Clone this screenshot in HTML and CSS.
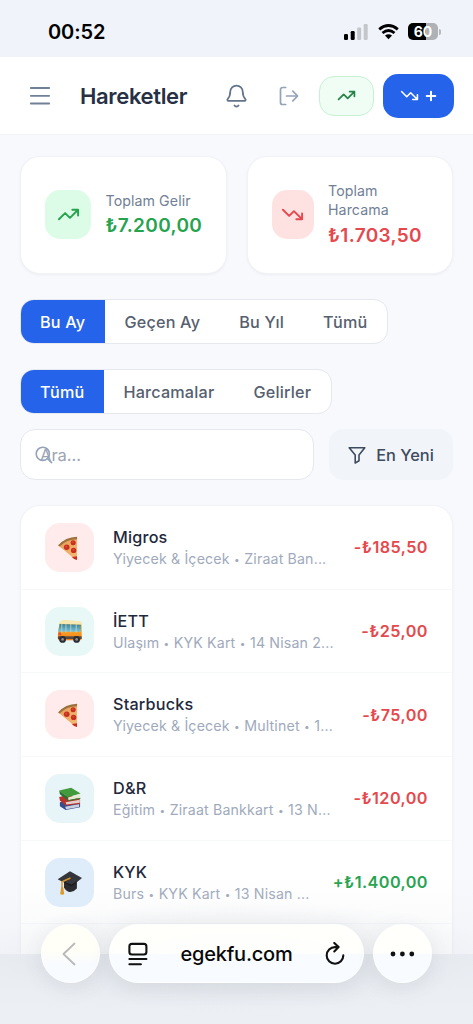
FILE: index.html
```html
<!DOCTYPE html>
<html lang="tr">
<head>
<meta charset="utf-8">
<meta name="viewport" content="width=device-width, initial-scale=1">
<title>Hareketler</title>
<link rel="stylesheet" href="styles.css">
</head>
<body>
<svg class="defs" width="0" height="0" aria-hidden="true">
  <defs>
    <linearGradient id="bus-body" x1="0" y1="0" x2="0" y2="1"><stop offset="0" stop-color="#ffd23c"/><stop offset="1" stop-color="#f47b16"/></linearGradient>
    <linearGradient id="glass" x1="0" y1="0" x2="0" y2="1"><stop offset="0" stop-color="#397f9c"/><stop offset="1" stop-color="#78c6dd"/></linearGradient>
    <linearGradient id="cheese" x1="0" y1="0" x2="1" y2="1"><stop offset="0" stop-color="#e29a55"/><stop offset="1" stop-color="#f6bd73"/></linearGradient>
  </defs>
  <symbol id="up" viewBox="0 0 24 24"><path d="M22 7l-8.5 8.5-5-5L2 17M16 7h6v6"/></symbol>
  <symbol id="down" viewBox="0 0 24 24"><path d="M22 17l-8.5-8.5-5 5L2 7M16 17h6v-6"/></symbol>
  <symbol id="pizza" viewBox="0 0 26 26">
    <path d="M1.4 10.5Q9 2.8 20.8 2.5V26Q16.8 24.8 14 21.2L2.8 12Z" fill="url(#cheese)"/>
    <path d="M1.2 10.8Q8.5 2 20.9 1.7V4.3Q10 4.3 2.5 12Z" fill="#9c713d"/>
    <g fill="#c82d20"><circle cx="10.1" cy="12.8" r="2.9"/><circle cx="16.8" cy="8" r="2.6"/><circle cx="17.3" cy="16" r="2.8"/><path d="M15.5 22.8l5.3-.8v4Q17.7 25.6 15.5 22.8Z"/></g>
    <g fill="#d94a2a"><circle cx="9.6" cy="12.2" r="1.2"/><circle cx="16.4" cy="7.5" r="1"/><circle cx="17" cy="15.4" r="1.1"/></g>
  </symbol>
  <symbol id="bus" viewBox="0 0 26 26">
    <path d="M2.5 5Q3 1.8 7 1.6L22 2.1Q25.6 2.3 25.7 6V20.2Q25.6 22 24 22H2Q.8 21.5.8 19L1.3 12Z" fill="url(#bus-body)"/>
    <path d="M2.5 5Q3 1.8 7 1.6L22 2.1Q25.6 2.3 25.7 6Z" fill="#f6e9b5"/>
    <path d="M2.7 5.3L24.8 6V13.2H1.3Z" fill="url(#glass)"/>
    <path d="M5 5V15M9.3 5V14M14.3 5V14M20 5V14" stroke="#d8d8b4" stroke-width=".8"/>
    <path d="M1 18h24.6v2.8H1Z" fill="#534b44"/><path d="M1.4 14h3v3h-3" fill="#e75722"/>
    <g fill="#2b2d33"><circle cx="5.8" cy="21.2" r="3.5"/><circle cx="20.4" cy="21.2" r="3.5"/></g><g fill="#8c9095"><circle cx="5.8" cy="21.2" r="1.4"/><circle cx="20.4" cy="21.2" r="1.4"/></g>
  </symbol>
  <symbol id="books" viewBox="0 0 26 26">
    <path d="M3 17l12-3 9 4v4.2l-15 2.7L3 21Z" fill="#344c91"/><path d="M8.5 21.5L23 18.8v3L9.5 24.2Z" fill="#c9cfdd"/>
    <path d="M2.3 11.5L12 9l12 5v4.8L9 20.2 3 15Z" fill="#b7322f"/><path d="M9 16.8L23.7 14.4v2.9L9.8 19.3Z" fill="#e3cfc8"/>
    <path d="M2.3 4.8L14.7 1.7 24.5 7.7 11 11.8Z" fill="#419a3c"/><path d="M2.3 4.8L11 11.8v3.4L3 8.5Z" fill="#28702c"/><path d="M11.5 12L24 8.2v4.1l-12 2.5Z" fill="#e3ead2"/><path d="M11 14.9l13.3-2.6v.9l-13.3 2.6Z" fill="#317b30"/>
  </symbol>
  <symbol id="cap" viewBox="0 0 26 26">
    <path d="M7.3 12L20.7 11V19.3Q17 23.5 12.7 22.8Q8.8 22 7.3 18Z" fill="#25262a"/>
    <path d="M.7 9.6L13.5 1.3 26 8.4 15 16.2Z" fill="#34353a"/><path d="M.7 9.6L15 15.3 26 8.4 15 17Z" fill="#131417"/>
    <path d="M14 8.3L5.2 12.2V19" fill="none" stroke="#d69422" stroke-width="1.5"/><path d="M4.4 18h2l1.1 7.3Q5.2 26.3 3.3 25Z" fill="#db961f"/>
  </symbol>
</svg>

<div class="phone">
  <div class="status">
    <time class="clock">00:52</time>
    <div class="status-icons">
      <svg width="24" height="16" viewBox="0 0 24 16"><rect x="0" y="10" width="4" height="6" rx="1.3"/><rect x="6.7" y="7" width="4" height="9" rx="1.3"/><g fill="#c3c6ca"><rect x="13.2" y="3.5" width="4" height="12.5" rx="1.3"/><rect x="19.7" y="0" width="4" height="16" rx="1.3"/></g></svg>
      <svg width="21" height="16" viewBox="0 0 21 16"><g fill="none" stroke="#000" stroke-width="2.8"><path d="M1.2 5.3Q10.5-2.4 19.8 5.3"/><path d="M4.5 9Q10.5 4 16.5 9"/></g><path d="M7 11.5Q10.5 8.8 14 11.5L10.5 15.2Z"/></svg>
      <span class="battery"><span>60</span></span>
    </div>
  </div>

  <header class="header">
    <svg class="menu" width="22" height="20" viewBox="0 0 22 20"><path d="M1.8 2h18.4M1.8 9.8h18.4M1.8 17.5h18.4"/></svg>
    <h1>Hareketler</h1>
    <svg class="bell" width="24" height="24" viewBox="0 0 24 24"><path d="M3.5 15.4a1 1 0 0 0 .7 1.7h15.6a1 1 0 0 0 .7-1.7C19.3 14.2 18 12.9 18 8.5a6 6 0 0 0-12 0c0 4.4-1.3 5.7-2.5 6.9M10 21.5a2.3 2.3 0 0 0 4 0"/></svg>
    <svg class="exit" width="20" height="20" viewBox="0 0 20 20"><path d="M6.7 1.5H3.5a2 2 0 0 0-2 2v13a2 2 0 0 0 2 2h3.2M7.5 10H18.5M13.8 5.2l4.8 4.8-4.8 4.8"/></svg>
    <button class="btn-income"><svg width="19" height="19"><use href="#up"/></svg></button>
    <button class="btn-expense"><svg width="19" height="19"><use href="#down"/></svg><svg width="12" height="12" viewBox="0 0 12 12"><path d="M6 1.7v8.6M1.7 6h8.6"/></svg></button>
  </header>

  <main class="main">
    <section class="stats">
      <article class="stat income"><span class="stat-icon"><svg width="23" height="23"><use href="#up"/></svg></span><div><p>Toplam Gelir</p><strong>₺7.200,00</strong></div></article>
      <article class="stat expense"><span class="stat-icon"><svg width="23" height="23"><use href="#down"/></svg></span><div><p>Toplam<br>Harcama</p><strong>₺1.703,50</strong></div></article>
    </section>

    <div class="segment period"><button class="active">Bu Ay</button><button>Geçen Ay</button><button>Bu Yıl</button><button>Tümü</button></div>
    <div class="segment kind"><button class="active">Tümü</button><button>Harcamalar</button><button>Gelirler</button></div>

    <div class="tools">
      <label class="search"><span>Ara...</span><svg width="18" height="18" viewBox="0 0 18 18"><circle cx="7.8" cy="7.8" r="6.6"/><path d="M12.6 12.6l4 4"/></svg></label>
      <button class="sort"><svg width="18" height="18" viewBox="0 0 18 18"><path d="M1.2 1.8h15.6L11 9v5.8L7.2 17V9Z"/></svg>En Yeni</button>
    </div>

    <section class="list">
      <article class="row"><span class="cat food"><svg width="25" height="25"><use href="#pizza"/></svg></span><div class="info"><h2>Migros</h2><p>Yiyecek &amp; İçecek <i>•</i> Ziraat Ban...</p></div><b>-₺185,50</b></article>
      <article class="row"><span class="cat travel"><svg width="25" height="25"><use href="#bus"/></svg></span><div class="info"><h2>İETT</h2><p>Ulaşım <i>•</i> KYK Kart <i>•</i> 14 Nisan 2...</p></div><b>-₺25,00</b></article>
      <article class="row"><span class="cat food"><svg width="25" height="25"><use href="#pizza"/></svg></span><div class="info"><h2>Starbucks</h2><p>Yiyecek &amp; İçecek <i>•</i> Multinet <i>•</i> 1...</p></div><b>-₺75,00</b></article>
      <article class="row"><span class="cat study"><svg width="25" height="25"><use href="#books"/></svg></span><div class="info"><h2>D&amp;R</h2><p>Eğitim <i>•</i> Ziraat Bankkart <i>•</i> 13 N...</p></div><b>-₺120,00</b></article>
      <article class="row"><span class="cat grant"><svg width="25" height="25"><use href="#cap"/></svg></span><div class="info"><h2>KYK</h2><p>Burs <i>•</i> KYK Kart <i>•</i> 13 Nisan ...</p></div><b class="plus">+₺1.400,00</b></article>
      <div class="row"></div>
    </section>
  </main>

  <div class="shade"></div>
  <nav class="browser-bar">
    <button class="round back"><svg width="16" height="24" viewBox="0 0 16 24"><path d="M13.5 1.5L2.5 12l11 10.5"/></svg></button>
    <div class="address">
      <svg width="20" height="24" viewBox="0 0 20 24"><rect x="1.4" y="1.9" width="17" height="10.6" rx="2.5"/><path d="M1.4 17h17M1.4 22.2h11.5"/></svg>
      <span>egekfu.com</span>
      <svg width="20" height="24" viewBox="0 0 20 24"><path d="M13.3 5.1H10A8.3 8.3 0 1 0 18.3 13.4M9.3 .9l4.3 4.2-4.3 4.3"/></svg>
    </div>
    <button class="round"><svg class="dots" width="26" height="6" viewBox="0 0 26 6"><circle cx="3" cy="3" r="2.4"/><circle cx="12.4" cy="3" r="2.4"/><circle cx="21.8" cy="3" r="2.4"/></svg></button>
  </nav>
</div>
</body>
</html>
```
FILE: styles.css
```css
* { box-sizing: border-box; }
body { margin: 0; font-family: Inter, "Noto Sans", sans-serif; color: #1e293b; background: #edf0f5; }
h1, h2, p { margin: 0; }
button { margin: 0; padding: 0; border: 0; background: none; font: inherit; letter-spacing: inherit; color: inherit; }
svg { display: block; flex: none; }
.defs { position: absolute; }
.phone { position: relative; height: 1024px; overflow: hidden; }

.status { height: 57px; padding: 6px 32px 0 48px; display: flex; align-items: center; justify-content: space-between; background: #f0f3f9; }
.clock { font-size: 20px; font-weight: 600; letter-spacing: -.1px; color: #000; }
.status-icons { display: flex; align-items: center; gap: 9px; }
.status-icons > svg:first-child { margin-right: 1px; }
.battery { display: flex; align-items: center; gap: 1px; }
.battery span { width: 30px; height: 17px; border-radius: 5px; background: linear-gradient(90deg, #000 60%, #aeb1b5 60%); color: #fff; font-size: 14px; font-weight: 700; line-height: 17px; text-align: center; }
.battery::after { content: ""; width: 2px; height: 6px; border-radius: 0 2px 2px 0; background: #b5b8bd; }

.header { height: 78px; padding: 0 19px 0 29px; display: flex; align-items: center; background: #fff; border-bottom: 1px solid #f0f2f7; fill: none; stroke-linecap: round; stroke-linejoin: round; }
.header h1 { width: 145px; margin-left: 29px; font-size: 22px; line-height: 28px; font-weight: 600; letter-spacing: -.35px; color: #273044; }
.menu { stroke: #718096; stroke-width: 1.8; }
.bell { width: 25px; height: 25px; margin-left: -1px; stroke: #64748b; stroke-width: 1.7; }
.exit { margin-left: 30px; stroke: #94a3b8; stroke-width: 1.7; }
.btn-income, .btn-expense { display: flex; align-items: center; justify-content: center; }
.btn-income { width: 55px; height: 40px; margin-left: 20px; border: 1px solid #c5f2d3; border-radius: 15px; background: #effdf4; stroke: #278448; stroke-width: 2.2; }
.btn-expense { width: 71px; height: 44px; margin-left: 9px; gap: 6px; border-radius: 15px; background: #2563eb; stroke: #fff; stroke-width: 2; }

.main { height: 819px; padding: 20.5px 20px 0; overflow: hidden; background: #f8f9fd; }
.stats { display: grid; grid-template-columns: 1fr 1fr; gap: 20px; }
.stat { height: 118.5px; padding-left: 24px; display: flex; align-items: center; gap: 15px; border: 1px solid #f1f3f7; border-radius: 20px; background: #fff; box-shadow: 0 1px 3px #0f172a0d; }
.stat p { font-size: 14.2px; line-height: 19.5px; color: #718096; letter-spacing: .08px; }
.stat strong { display: block; margin-top: 2px; font-size: 19px; line-height: 27px; font-weight: 600; letter-spacing: .35px; }
.stat-icon { width: 46px; height: 49px; margin-right: -.5px; display: grid; place-items: center; border-radius: 15px; fill: none; stroke-width: 2; stroke-linecap: round; stroke-linejoin: round; }
.income .stat-icon { background: #dcfce7; stroke: #25a34e; }
.income strong { color: #25a34e; }
.expense .stat-icon { width: 42px; background: #fee2e2; stroke: #e5484d; }
.expense strong { color: #e5484d; }

.segment { width: max-content; display: flex; overflow: hidden; border: 1px solid #e5e8ef; border-radius: 14px; background: #fff; font-size: 16.2px; font-weight: 500; letter-spacing: .2px; color: #56606f; }
.segment button { height: 43px; padding: 0 19.5px; white-space: nowrap; }
.segment .active { padding-left: 19px; color: #fff; background: #2563eb; }
.period { margin-top: 25px; }
.kind { margin-top: 25px; }

.tools { margin-top: 15px; display: flex; gap: 15px; }
.search { flex: 1; height: 51px; padding-left: 19px; display: flex; align-items: center; border: 1px solid #e5e8ef; border-radius: 15px; background: #fff; font-size: 16.5px; color: #9aa4b5; }
.search svg { margin-left: -46px; fill: none; stroke: #94a3b8; stroke-width: 1.6; stroke-linecap: round; }
.sort { width: 124px; display: flex; align-items: center; justify-content: center; gap: 10px; border-radius: 15px; background: #f1f4f9; font-size: 16.4px; font-weight: 500; color: #3f4b5f; }
.sort svg { fill: none; stroke: currentColor; stroke-width: 1.6; stroke-linejoin: round; }

.list { margin-top: 25px; border: 1px solid #f1f3f7; border-radius: 20px 20px 0 0; background: #fff; box-shadow: 0 1px 3px #0f172a0a; }
.row { height: 83.7px; padding: 0 24px; display: flex; align-items: center; border-bottom: 1px solid #f6f8fb; }
.cat { width: 49px; height: 49px; display: grid; place-items: center; flex: none; border-radius: 15px; }
.cat svg { margin-right: 1px; }
.food { background: #ffebeb; }
.travel { background: #e8f8f7; }
.study { background: #e7f4f8; }
.grant { background: #dfedfb; }
.info { flex: 1; min-width: 0; margin-left: 19px; white-space: nowrap; }
.info h2 { font-size: 16.2px; line-height: 23px; font-weight: 500; letter-spacing: .2px; color: #1e293b; }
.info p { margin-top: -1px; font-size: 14.2px; line-height: 21px; color: #a0aabc; letter-spacing: .15px; }
.info i { display: inline-block; width: 6.3px; font-size: 10px; line-height: 1; font-style: normal; vertical-align: 1px; text-align: center; }
.row b { font-size: 16.2px; font-weight: 600; letter-spacing: .45px; color: #e5484d; }
.row .plus { color: #25a34e; }

.shade { position: absolute; inset: 875px 0 0; background: linear-gradient(transparent, #d9dee433 55%, #e8ecf022), radial-gradient(ellipse 260px 55px at 50% 80px, #bcc2ca55, transparent); }
.browser-bar { position: absolute; left: 41px; top: 924px; width: 391px; height: 59px; display: flex; justify-content: space-between; fill: none; stroke: #111; stroke-linecap: round; stroke-linejoin: round; }
.round, .address { border: 1px solid #fffc; background: linear-gradient(#fffffcf2 49%, #f8fbfff8 52%); box-shadow: 0 5px 20px #4b55631a; }
.round { width: 59px; border-radius: 50%; display: grid; place-items: center; }
.back { background: linear-gradient(#fffef7 45%, #f8fbff 70%); stroke: #b9b9b9; stroke-width: 1.8; }
.back svg { margin-right: 4px; }
.address { width: 255px; padding: 0 18px; display: flex; align-items: center; justify-content: space-between; border-radius: 30px; stroke-width: 2.1; }
.address span { font-size: 20px; font-weight: 500; color: #080808; letter-spacing: -.2px; }
.dots { fill: #111; stroke: none; }
```
